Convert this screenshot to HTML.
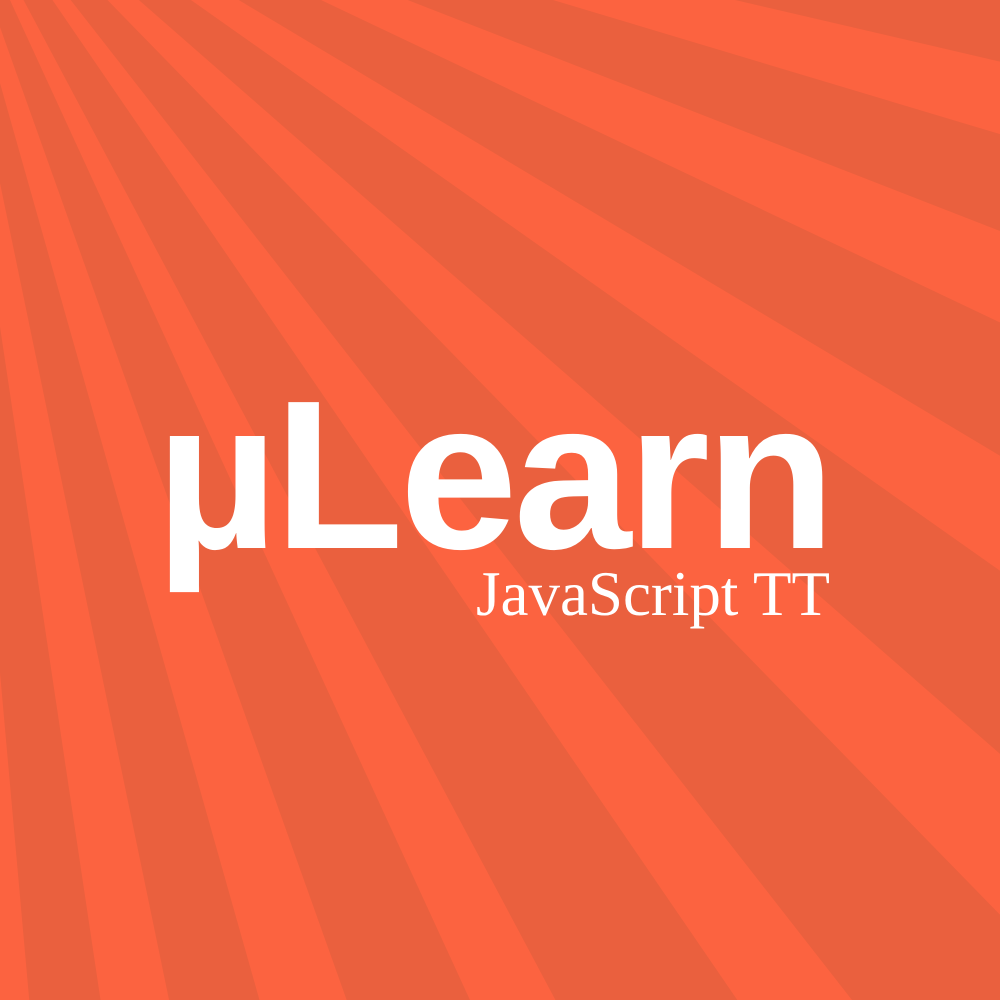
<!DOCTYPE html>
<html><head><meta charset="utf-8"><style>
html,body{margin:0;padding:0;width:1000px;height:1000px;overflow:hidden;background:#ea603e}
#w{position:relative;width:1000px;height:1000px;overflow:hidden}
svg{position:absolute;left:0;top:0;display:block}
.t1{position:absolute;left:156px;top:369px;font-family:"Liberation Sans",sans-serif;font-weight:bold;font-size:212px;color:#fff;line-height:1;white-space:nowrap;letter-spacing:-4px}
.t2{position:absolute;right:170px;top:563px;font-family:"Liberation Serif",serif;font-size:63px;color:#fff;line-height:1;white-space:nowrap}
</style></head><body><div id="w">
<svg width="1000" height="1000" viewBox="0 0 1000 1000">
<rect width="1000" height="1000" fill="#ea603e"/>
<g fill="#fc6340">
<polygon points="-77,-189 2845,491 2796,673"/>
<polygon points="-77,-189 2718,901 2633,1098"/>
<polygon points="-77,-189 2497,1352 2374,1540"/>
<polygon points="-77,-189 2180,1787 2018,1958"/>
<polygon points="-77,-189 1770,2175 1618,2286"/>
<polygon points="-77,-189 1332,2460 1177,2537"/>
<polygon points="-77,-189 930,2637 740,2698"/>
<polygon points="-77,-189 531,2749 366,2778"/>
<polygon points="-77,-189 190,2799 -598,2765"/>
</g>
</svg>
<div class="t1">µLearn</div>
<div class="t2">JavaScript TT</div>
</div></body></html>
